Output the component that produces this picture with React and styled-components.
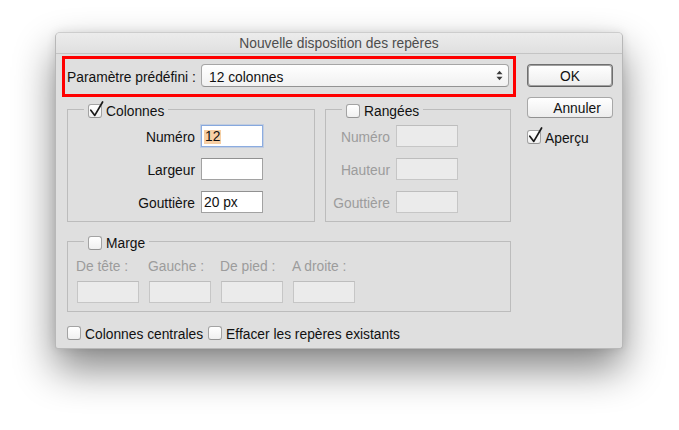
import React from 'react';
import styled, { createGlobalStyle } from 'styled-components';

const Global = createGlobalStyle`
  html, body { margin: 0; padding: 0; background: #ffffff; }
  body {
    font-family: "Liberation Sans", Arial, sans-serif;
    font-size: 13.8px;
    color: #111;
  }
  * { box-sizing: border-box; }
`;

const Page = styled.div`
  width: 679px;
  height: 430px;
  padding: 32px 0 0 55px;
  background: #ffffff;
  overflow: hidden;
`;

const Window = styled.div`
  width: 568px;
  height: 317px;
  background: #dfdfdf;
  border: 1px solid #b8b8b8;
  border-top-color: #cdcdcd;
  border-radius: 5px 5px 3px 3px;
  box-shadow: 0 20px 40px rgba(0, 0, 0, 0.48), 0 0 10px rgba(0, 0, 0, 0.1);
  display: flex;
  flex-direction: column;
`;

const TitleBar = styled.div`
  height: 21px;
  flex: none;
  border-bottom: 1px solid #c4c4c4;
  border-radius: 4px 4px 0 0;
  background: linear-gradient(#ececec, #e0e0e0);
  color: #4d4d4d;
  text-align: center;
  padding-top: 1px;
  line-height: 20px;
`;

const Content = styled.div`
  display: flex;
  padding: 2px 0 0 6px;
`;

const LeftCol = styled.div`
  width: 454px;
  display: flex;
  flex-direction: column;
`;

const RightCol = styled.div`
  width: 86px;
  margin-left: 11px;
  padding-top: 8px;
  display: flex;
  flex-direction: column;
`;

const PresetBox = styled.div`
  height: 41px;
  border: 3px solid #ff0000;
  padding: 5px 4px 0 2px;
  display: flex;
  align-items: flex-start;
`;

const PresetLabel = styled.span`
  line-height: 23px;
  padding-top: 2px;
  white-space: nowrap;
`;

const Select = styled.div`
  margin-left: auto;
  width: 308px;
  height: 23px;
  border: 1px solid #a6a6a6;
  border-bottom-color: #939393;
  border-radius: 4px;
  background: linear-gradient(#ffffff, #f1f1f1);
  display: flex;
  align-items: center;
  padding: 0 5px 0 7px;
`;

const SelectText = styled.span`
  flex: 1;
  line-height: 17px;
  padding-top: 3px;
`;

const GroupsRow = styled.div`
  display: flex;
  gap: 10px;
  margin: 2px 5px 0;
`;

const Group = styled.fieldset`
  margin: 0;
  padding: 0;
  min-width: 0;
  width: ${(p) => p.$w}px;
  border: 1px solid #bcbcbc;
`;

const Legend = styled.legend`
  margin-left: 16px;
  padding: 4px 4px 0;
  height: 20px;
`;

const LegendInner = styled.span`
  display: inline-flex;
  align-items: center;
  gap: 4px;
  height: 16px;
  line-height: 16px;
`;

const LegendText = styled.span`
  padding-top: 2px;
`;

const FieldGrid = styled.div`
  display: grid;
  grid-template-columns: ${(p) => p.$label}px 62px;
  column-gap: 6px;
  row-gap: 11px;
  padding: 6px 0 8px 0;
  align-items: center;
`;

const FieldLabel = styled.span`
  text-align: right;
  white-space: nowrap;
  line-height: 16px;
  padding-top: 3px;
  color: ${(p) => (p.$disabled ? '#9c9c9c' : '#111')};
`;

const Field = styled.div`
  width: 62px;
  height: 22px;
  border: 1px solid ${(p) => (p.$focus ? '#8cace0' : p.$disabled ? '#c6c6c6' : '#a2a2a2')};
  border-top-color: ${(p) => (p.$focus ? '#86a8de' : p.$disabled ? '#bdbdbd' : '#919191')};
  background: ${(p) => (p.$disabled ? '#ebebeb' : '#ffffff')};
  box-shadow: ${(p) => (p.$focus ? '0 0 0 1px rgba(140, 172, 224, 0.35)' : 'none')};
  padding: 2px 2px 0;
  display: flex;
  align-items: center;
  line-height: 14px;
  white-space: nowrap;
`;

const Selected = styled.span`
  background: #f8cfa4;
  padding: 0 1px;
  line-height: 14px;
`;

const MargeGroup = styled(Group)`
  margin: 9px 5px 0;
`;

const MargeGrid = styled.div`
  display: grid;
  grid-template-columns: repeat(4, 62px);
  column-gap: 10px;
  row-gap: 6px;
  padding: 6px 0 8px 9px;
`;

const MargeLabel = styled.span`
  color: #9c9c9c;
  line-height: 16px;
  padding-top: 2px;
  white-space: nowrap;
  margin-left: -1px;
`;

const BottomRow = styled.div`
  display: flex;
  gap: 5px;
  margin: 14px 5px 0;
`;

const CheckItem = styled.label`
  display: inline-flex;
  align-items: center;
  gap: 4px;
  height: 14px;
  white-space: nowrap;
  color: ${(p) => (p.$disabled ? '#9c9c9c' : '#111')};
`;

const CheckText = styled.span`
  line-height: 14px;
  padding-top: 3px;
`;

const Box = styled.span`
  position: relative;
  display: inline-block;
  flex: none;
  width: 14px;
  height: 14px;
  border: 1px solid #a3a3a3;
  border-bottom-color: #949494;
  border-radius: 3px;
  background: linear-gradient(#ffffff, #f0f0f0);
`;

const Tick = styled.svg`
  position: absolute;
  left: -1px;
  top: -4px;
  overflow: visible;
`;

const Button = styled.div`
  height: ${(p) => (p.$default ? 23 : 21)}px;
  margin-top: ${(p) => (p.$default ? 0 : 10)}px;
  border: 1px solid ${(p) => (p.$default ? '#6f6f6f' : '#a8a8a8')};
  border-bottom-color: ${(p) => (p.$default ? '#5f5f5f' : '#919191')};
  box-shadow: ${(p) => (p.$default ? 'inset 0 0 0 1px #a0a0a0' : 'none')};
  border-radius: 4px;
  background: linear-gradient(#ffffff, #ededed);
  text-align: center;
  padding-left: ${(p) => p.$shift || 0}px;
  padding-top: 2px;
  line-height: ${(p) => (p.$default ? 19 : 17)}px;
  color: #111;
`;

const SideCheck = styled.div`
  margin-top: 12px;
`;

function Check({ checked }) {
  return (
    <Box>
      {checked && (
        <Tick width="18" height="18" viewBox="0 -3 18 18">
          <path d="M2.8 6.2 L6.8 11.4 L14.6 -2" fill="none" stroke="#1a1a1a" strokeWidth="1.7" strokeLinecap="round" strokeLinejoin="round" />
        </Tick>
      )}
    </Box>
  );
}

function Arrows() {
  return (
    <svg width="7" height="11" viewBox="0 0 7 11">
      <path d="M0.5 4.2 L3.5 0.8 L6.5 4.2 Z" fill="#3a3a3a" />
      <path d="M0.5 6.8 L3.5 10.2 L6.5 6.8 Z" fill="#3a3a3a" />
    </svg>
  );
}

function FieldsGroup({ title, width, labelWidth, checked, disabled, rows }) {
  return (
    <Group $w={width}>
      <Legend>
        <LegendInner>
          <Check checked={checked} />
          <LegendText>{title}</LegendText>
        </LegendInner>
      </Legend>
      <FieldGrid $label={labelWidth}>
        {rows.map((r) => (
          <React.Fragment key={r.label}>
            <FieldLabel $disabled={disabled}>{r.label}</FieldLabel>
            <Field $disabled={disabled} $focus={r.focus}>
              {r.selected ? <Selected>{r.value}</Selected> : r.value}
            </Field>
          </React.Fragment>
        ))}
      </FieldGrid>
    </Group>
  );
}

const margeLabels = ['De tête :', 'Gauche :', 'De pied :', 'A droite :'];

export default function App() {
  return (
    <>
      <Global />
      <Page>
        <Window>
          <TitleBar>Nouvelle disposition des repères</TitleBar>
          <Content>
            <LeftCol>
              <PresetBox>
                <PresetLabel>Paramètre prédéfini :</PresetLabel>
                <Select>
                  <SelectText>12 colonnes</SelectText>
                  <Arrows />
                </Select>
              </PresetBox>
              <GroupsRow>
                <FieldsGroup
                  title="Colonnes"
                  width={248}
                  labelWidth={127}
                  checked
                  rows={[
                    { label: 'Numéro', value: '12', selected: true, focus: true },
                    { label: 'Largeur', value: '' },
                    { label: 'Gouttière', value: '20 px' },
                  ]}
                />
                <FieldsGroup
                  title="Rangées"
                  width={186}
                  labelWidth={64}
                  disabled
                  rows={[
                    { label: 'Numéro', value: '' },
                    { label: 'Hauteur', value: '' },
                    { label: 'Gouttière', value: '' },
                  ]}
                />
              </GroupsRow>
              <MargeGroup $w={444}>
                <Legend>
                  <LegendInner>
                    <Check />
                    <LegendText>Marge</LegendText>
                  </LegendInner>
                </Legend>
                <MargeGrid>
                  {margeLabels.map((l) => (
                    <MargeLabel key={l}>{l}</MargeLabel>
                  ))}
                  {margeLabels.map((l) => (
                    <Field key={l} $disabled />
                  ))}
                </MargeGrid>
              </MargeGroup>
              <BottomRow>
                <CheckItem>
                  <Check />
                  <CheckText>Colonnes centrales</CheckText>
                </CheckItem>
                <CheckItem>
                  <Check />
                  <CheckText>Effacer les repères existants</CheckText>
                </CheckItem>
              </BottomRow>
            </LeftCol>
            <RightCol>
              <Button $default>OK</Button>
              <Button $shift={14}>Annuler</Button>
              <SideCheck>
                <CheckItem>
                  <Check checked />
                  <CheckText>Aperçu</CheckText>
                </CheckItem>
              </SideCheck>
            </RightCol>
          </Content>
        </Window>
      </Page>
    </>
  );
}
